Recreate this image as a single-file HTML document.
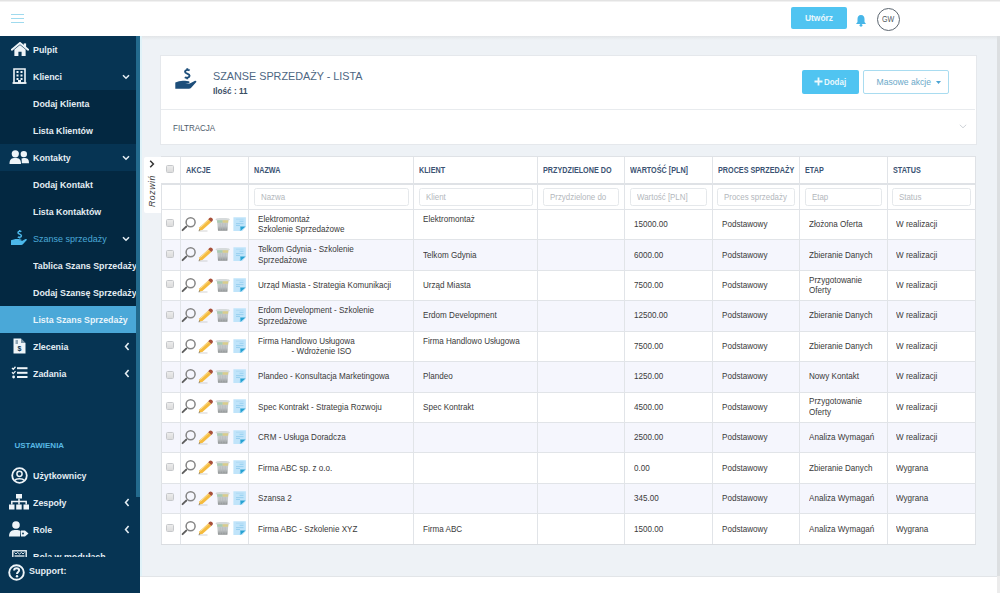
<!DOCTYPE html><html><head><meta charset="utf-8"><title>Szanse sprzedaży</title><style>
*{box-sizing:border-box;margin:0;padding:0}
.sx{display:inline-block;transform-origin:0 0}
html,body{width:1000px;height:593px;overflow:hidden;background:#fff;font-family:"Liberation Sans",sans-serif}
.a{position:absolute}
.nw{white-space:nowrap}
#topstrip{left:0;top:0;width:1000px;height:2px;background:linear-gradient(#e3e3e3 0,#e3e3e3 50%,#fff 100%)}
#hdr{left:0;top:2px;width:1000px;height:35px;background:#fff;border-bottom:1px solid #e3e5e8}
#side{left:0;top:36px;width:140px;height:557px;background:#063453;overflow:hidden}
.si{position:absolute;left:0;width:136px;height:27px;line-height:27px;color:#e4edf3;font-size:9.3px;font-weight:bold;white-space:nowrap}
.si .t{position:absolute;left:32.5px;top:0.6px;transform-origin:0 0;transform:scaleX(0.95)}
.sub{background:#032841}
.act{background:#4aa8d8;color:#e8f4fb}
#content{left:140px;top:36px;width:857px;height:540px;background:#eef2f6}
#footer{left:140px;top:576px;width:857px;height:17px;background:#fff;border-top:1px solid #e2e5e8}
#rstrip{left:997px;top:36px;width:3px;height:540px;background:#dcdfe1}
#panel{left:160px;top:55px;width:817px;height:90px;background:#fff;border:1px solid #e5e8ec}
.th{position:absolute;top:0;height:27px;line-height:27px;font-size:8.6px;font-weight:bold;color:#3b5373;white-space:nowrap}
.td{position:absolute;font-size:8.8px;color:#3a3a3a;white-space:nowrap;line-height:10.7px}
.inp{position:absolute;height:18px;border:1px solid #e5e8eb;border-radius:2.5px;background:#fff;font-size:8.6px;color:#b3b7bc;line-height:16px;padding-left:6px;white-space:nowrap}
.vl{position:absolute;width:1px;background:#e1e4e8}
.hl{position:absolute;height:1px;background:#e1e4e8}
.cb{position:absolute;width:8px;height:8px;border:1px solid #c6c8cb;border-radius:1.5px;background:linear-gradient(#ececec,#dcdcdc)}
</style></head><body><div id="topstrip" class="a"></div><div id="hdr" class="a"><svg class="a" style="left:10px;top:11px" width="15" height="11" viewBox="0 0 15 11"><path d="M1 1.5 H14 M1 5.5 H14 M1 9.5 H14" stroke="#9fdaee" stroke-width="1"/></svg></div><div class="a" style="left:791px;top:7px;width:56px;height:22px;background:#50c4f1;border-radius:2px;color:#eaf8fd;font-size:8.4px;font-weight:bold;line-height:22px;text-align:center">Utwórz</div><svg class="a" style="left:855px;top:14px" width="12" height="13" viewBox="0 0 12 13"><path d="M6 1 C3.5 1 2.5 3 2.5 5 V8 L1 10 H11 L9.5 8 V5 C9.5 3 8.5 1 6 1Z" fill="#47b6e8"/><circle cx="6" cy="11.3" r="1.4" fill="#47b6e8"/></svg><div class="a" style="left:876.5px;top:8px;width:23px;height:23px;border:1.1px solid #5c6670;border-radius:50%;font-size:8.4px;color:#4f5860;line-height:20.6px;text-align:center"><span class="sx" style="transform:scaleX(0.85);transform-origin:50% 50%">GW</span></div>
<div id="side" class="a"><div class="si" style="top:0px"><svg class="a" style="left:10.5px;top:6px" width="18" height="15" viewBox="0 0 19 16"><path d="M0.8 8.2 L9.5 1 L18.2 8.2" fill="none" stroke="#eef4f8" stroke-width="2.2" stroke-linejoin="round" stroke-linecap="round"/><path d="M3.5 8 L9.5 3.2 L15.5 8 V15 H11.2 V10.5 H7.8 V15 H3.5 Z" fill="#eef4f8"/><rect x="13.5" y="1.5" width="2.5" height="4" fill="#eef4f8"/></svg><span class="t" style="">Pulpit</span></div><div class="si" style="top:27px"><svg class="a" style="left:12px;top:5px" width="15" height="16" viewBox="0 0 15 16"><path d="M2 1 H13 V15 H2 Z" fill="none" stroke="#eef4f8" stroke-width="1.6"/><path d="M0.5 15 H14.5" stroke="#eef4f8" stroke-width="1.6"/><g fill="#eef4f8"><rect x="4.5" y="3" width="2" height="2"/><rect x="8.5" y="3" width="2" height="2"/><rect x="4.5" y="6.5" width="2" height="2"/><rect x="8.5" y="6.5" width="2" height="2"/><rect x="4.5" y="10" width="2" height="2"/><rect x="8.5" y="10" width="2" height="2"/><rect x="6" y="12" width="3" height="3"/></g></svg><span class="t" style="">Klienci</span><svg class="a" style="left:121.5px;top:10.5px" width="8" height="6" viewBox="0 0 8 6"><path d="M1 1.2 L4 4.2 L7 1.2" fill="none" stroke="#e4edf3" stroke-width="1.6"/></svg></div><div class="si sub" style="top:54px"><span class="t" style="">Dodaj Klienta</span></div><div class="si sub" style="top:81px"><span class="t" style="">Lista Klientów</span></div><div class="si" style="top:108px"><svg class="a" style="left:9px;top:6px" width="21" height="15" viewBox="0 0 21 15"><circle cx="6.3" cy="3.8" r="3.6" fill="#eef4f8"/><circle cx="14.8" cy="4.1" r="3.2" fill="#eef4f8"/><path d="M0.5 14 C0.5 9 2.5 8 6.3 8 C10 8 12 9 12 14 Z" fill="#eef4f8"/><path d="M12.5 8.5 C13.2 8.2 14 8 14.8 8 C18.5 8 20 9 20 13.2 H12.8 C12.8 11 12.6 9.5 12.5 8.5Z" fill="#eef4f8"/></svg><span class="t" style="">Kontakty</span><svg class="a" style="left:121.5px;top:10.5px" width="8" height="6" viewBox="0 0 8 6"><path d="M1 1.2 L4 4.2 L7 1.2" fill="none" stroke="#e4edf3" stroke-width="1.6"/></svg></div><div class="si sub" style="top:135px"><span class="t" style="">Dodaj Kontakt</span></div><div class="si sub" style="top:162px"><span class="t" style="">Lista Kontaktów</span></div><div class="si sub" style="top:189px"><svg class="a" style="left:10px;top:4px" width="18" height="17" viewBox="0 0 18 17"><path d="M11.4 2.6 C10.6 2 8 2 8 3.7 C8 5.4 11.4 4.9 11.4 6.8 C11.4 8.5 8.7 8.5 7.8 7.9 M9.7 0.9 V2.3 M9.7 8.3 V9.5" fill="none" stroke="#4cb8ea" stroke-width="1.5"/><path d="M1 11.3 L3.8 10.4 C5.3 9.9 6.8 9.8 8.3 10 L11 10.4 C11.9 10.5 12 11.6 11.2 11.7 L8.5 11.9 L11.9 12.1 L15.5 10.1 C16.5 9.6 17.3 10.5 16.6 11.2 L13.1 15 C12.6 15.6 12 15.9 11.2 15.9 L1 15.9 Z" fill="#4cb8ea"/></svg><span class="t" style="color:#4aa8d8;font-weight:normal;font-size:9.3px;transform:scaleX(0.97)">Szanse sprzedaży</span><svg class="a" style="left:121.5px;top:10.5px" width="8" height="6" viewBox="0 0 8 6"><path d="M1 1.2 L4 4.2 L7 1.2" fill="none" stroke="#e4edf3" stroke-width="1.6"/></svg></div><div class="si sub" style="top:216px"><span class="t" style="">Tablica Szans Sprzedaży</span></div><div class="si sub" style="top:243px"><span class="t" style="">Dodaj Szansę Sprzedaży</span></div><div class="si act" style="top:270px"><span class="t" style="">Lista Szans Sprzedaży</span></div><div class="si" style="top:297px"><svg class="a" style="left:13px;top:5px" width="13" height="16" viewBox="0 0 13 16"><path d="M0.5 0.5 H8 L12.5 5 V15.5 H0.5 Z" fill="#eef4f8"/><path d="M8 0.5 V5 H12.5" fill="#063453" opacity="0.5"/><text x="6.5" y="13" font-family="Liberation Sans" font-size="7" fill="#063453" text-anchor="middle">$</text><path d="M2.5 3 H5 M2.5 5 H5" stroke="#063453" stroke-width="0.8"/></svg><span class="t" style="">Zlecenia</span><svg class="a" style="left:124.3px;top:8.5px" width="6" height="9" viewBox="0 0 6 9"><path d="M4.6 1 L1.6 4.5 L4.6 8" fill="none" stroke="#e4edf3" stroke-width="1.6"/></svg></div><div class="si" style="top:324px"><svg class="a" style="left:11px;top:6px" width="17" height="13" viewBox="0 0 17 13"><path d="M1 2 L2.3 3.3 L4.5 0.8 M1 6.3 L2.3 7.6 L4.5 5.1" fill="none" stroke="#eef4f8" stroke-width="1.3"/><circle cx="2.6" cy="11" r="1.4" fill="#eef4f8"/><rect x="6" y="1.2" width="10.5" height="2" fill="#eef4f8"/><rect x="6" y="5.8" width="10.5" height="2" fill="#eef4f8"/><rect x="6" y="10" width="10.5" height="2" fill="#eef4f8"/></svg><span class="t" style="">Zadania</span><svg class="a" style="left:124.3px;top:8.5px" width="6" height="9" viewBox="0 0 6 9"><path d="M4.6 1 L1.6 4.5 L4.6 8" fill="none" stroke="#e4edf3" stroke-width="1.6"/></svg></div><div class="a" style="left:136px;top:0;width:4px;height:461px;background:#236a8d"></div><div class="a nw" style="left:14.5px;top:403px;line-height:14px;font-size:8px;font-weight:bold;color:#58b8e4">USTAWIENIA</div><div class="si" style="top:426px"><svg class="a" style="left:11px;top:5px" width="17" height="17" viewBox="0 0 17 17"><circle cx="8.5" cy="8.5" r="7.3" fill="none" stroke="#eef4f8" stroke-width="1.8"/><circle cx="8.5" cy="6.8" r="2.6" fill="none" stroke="#eef4f8" stroke-width="1.5"/><path d="M4 13.5 C5 11 12 11 13 13.5" fill="none" stroke="#eef4f8" stroke-width="1.5"/></svg><span class="t">Użytkownicy</span></div><div class="si" style="top:453px"><svg class="a" style="left:9px;top:5px" width="20" height="16" viewBox="0 0 20 16"><g fill="#eef4f8"><rect x="7" y="0" width="6" height="4.5"/><rect x="0" y="10.5" width="5.5" height="5"/><rect x="7.2" y="10.5" width="5.5" height="5"/><rect x="14.5" y="10.5" width="5.5" height="5"/></g><path d="M10 4.5 V10.5 M2.8 10.5 V7.5 H17.2 V10.5" fill="none" stroke="#eef4f8" stroke-width="1.5"/></svg><span class="t">Zespoły</span><svg class="a" style="left:124.3px;top:8.5px" width="6" height="9" viewBox="0 0 6 9"><path d="M4.6 1 L1.6 4.5 L4.6 8" fill="none" stroke="#e4edf3" stroke-width="1.6"/></svg></div><div class="si" style="top:480px"><svg class="a" style="left:9px;top:5px" width="20" height="16" viewBox="0 0 20 16"><circle cx="7" cy="4" r="3.8" fill="#eef4f8"/><path d="M0 15.5 C0 10 3 9 7 9 C9 9 10.5 9.3 11.5 10 L11 15.5 Z" fill="#eef4f8"/><path d="M12 9.5 H16 L19.5 12.5 L16 15.5 H12 Z" fill="#eef4f8"/><circle cx="14" cy="12.5" r="0.9" fill="#063453"/></svg><span class="t">Role</span><svg class="a" style="left:124.3px;top:8.5px" width="6" height="9" viewBox="0 0 6 9"><path d="M4.6 1 L1.6 4.5 L4.6 8" fill="none" stroke="#e4edf3" stroke-width="1.6"/></svg></div><div class="si" style="top:507px"><svg class="a" style="left:12px;top:6.5px" width="15" height="14" viewBox="0 0 15 14"><rect x="0.8" y="0.8" width="13.4" height="12" fill="none" stroke="#eef4f8" stroke-width="1.4"/><path d="M2.5 2.5 L4 4 L5.5 2.5 L7.5 4 L9.5 2.5 L11 4 L12.5 2.5" fill="none" stroke="#eef4f8" stroke-width="0.9"/><path d="M2.5 6 H12.5" stroke="#eef4f8" stroke-width="1.3"/></svg><span class="t">Rola w modułach</span></div><div class="a" style="left:0;top:521px;width:140px;height:36px;background:#063453"><svg class="a" style="left:7.8px;top:7px" width="17" height="17" viewBox="0 0 17 17"><circle cx="8.5" cy="8.5" r="7.3" fill="none" stroke="#eef4f8" stroke-width="1.9"/><path d="M6.1 6.6 C6.1 4.9 7.2 4.2 8.6 4.2 C10 4.2 11.1 5 11.1 6.3 C11.1 7.9 9 8 9 9.9" fill="none" stroke="#eef4f8" stroke-width="2"/><circle cx="9" cy="12.3" r="1.2" fill="#eef4f8"/></svg><span class="a nw" style="left:29px;top:-3px;line-height:35px;font-size:9px;font-weight:bold;color:#e4edf3">Support:</span></div></div>
<div id="content" class="a"></div><div class="a" style="left:140px;top:36px;width:857px;height:4px;background:linear-gradient(#e2e5e8,#eef2f6)"></div><div class="a" style="left:140px;top:36px;width:2px;height:540px;background:#dff2f8"></div>
<div id="footer" class="a"></div>
<div id="rstrip" class="a"></div><div class="a" style="left:997px;top:576px;width:3px;height:17px;background:#ececec"></div>
<div id="panel" class="a"></div><svg class="a" style="left:174px;top:67px" width="24" height="23" viewBox="0 0 24 23"><path d="M15.6 3.4 C14.6 2.6 11 2.6 11 4.8 C11 7 15.6 6.3 15.6 8.8 C15.6 11 12 11 10.8 10.2 M13.3 1.2 V3 M13.3 10.8 V12.3" fill="none" stroke="#1d4e7a" stroke-width="1.9"/><path d="M1.3 15.6 L5 14.3 C7 13.6 9 13.5 11 13.8 L14.6 14.3 C15.8 14.5 15.9 15.9 14.8 16.1 L11.2 16.4 L15.8 16.6 L20.6 13.9 C21.9 13.2 23 14.4 22.1 15.3 L17.4 20.6 C16.7 21.4 15.9 21.8 14.8 21.8 L1.3 21.8 Z" fill="#1d4e7a"/></svg><div class="a nw" style="left:213px;top:68.7px;font-size:11.8px;line-height:14px;color:#4d6682"><span class="sx" style="transform:scaleX(0.915)">SZANSE SPRZEDAŻY - LISTA</span></div><div class="a nw" style="left:213px;top:85.6px;font-size:9px;line-height:11px;font-weight:bold;color:#3b4d64"><span class="sx" style="transform:scaleX(0.91)">Ilość : 11</span></div><div class="a" style="left:802px;top:70px;width:57px;height:24px;background:#50c4f1;border-radius:2px"></div><svg class="a" style="left:814px;top:77px" width="9" height="9" viewBox="0 0 9 9"><path d="M4.5 0.5 V8.5 M0.5 4.5 H8.5" stroke="#eef9fd" stroke-width="1.8"/></svg><div class="a nw" style="left:824.4px;top:70px;line-height:24px;font-size:9.4px;font-weight:bold;color:#eaf8fd"><span class="sx" style="transform:scaleX(0.85)">Dodaj</span></div><div class="a" style="left:863px;top:70px;width:86px;height:24px;border:1px solid #a9dcf0;border-radius:2px;background:#fff"></div><div class="a nw" style="left:876.5px;top:70px;line-height:24px;font-size:8.6px;color:#6aa9c9">Masowe akcje</div><svg class="a" style="left:936px;top:81px" width="5" height="3" viewBox="0 0 5 3"><path d="M0 0 H5 L2.5 3Z" fill="#4aa3d3"/></svg><div class="a" style="left:161px;top:109px;width:814px;height:1px;background:#e8ebee"></div><div class="a nw" style="left:172.5px;top:121.6px;line-height:12px;font-size:9.5px;color:#4f5d6c"><span class="sx" style="transform:scaleX(0.845)">FILTRACJA</span></div><svg class="a" style="left:959px;top:124px" width="8" height="5" viewBox="0 0 8 5"><path d="M0.8 0.8 L4 3.8 L7.2 0.8" fill="none" stroke="#c8cdd2" stroke-width="0.9"/></svg>
<div class="a" style="left:143.5px;top:157px;width:18px;height:56px;background:#fff;border-radius:2px 0 0 2px"></div><svg class="a" style="left:148.8px;top:159.8px" width="6" height="8" viewBox="0 0 6 8"><path d="M1.2 0.8 L4.4 4 L1.2 7.2" fill="none" stroke="#333" stroke-width="1.5"/></svg><div class="a nw" style="left:152px;top:191px;transform:translate(-50%,-50%) rotate(-90deg);font-size:8.7px;font-style:italic;color:#3a3a3a;letter-spacing:0.6px">Rozwiń</div><div class="a" style="left:161px;top:156.6px;width:814.5px;height:387.54999999999995px;background:#fff"></div><div class="a" style="left:161px;top:240.15px;width:814.5px;height:29.95px;background:#f5f6fd"></div><div class="a" style="left:161px;top:301.05px;width:814.5px;height:29.95px;background:#f5f6fd"></div><div class="a" style="left:161px;top:361.95px;width:814.5px;height:29.95px;background:#f5f6fd"></div><div class="a" style="left:161px;top:422.85px;width:814.5px;height:29.95px;background:#f5f6fd"></div><div class="a" style="left:161px;top:483.75px;width:814.5px;height:29.95px;background:#f5f6fd"></div><div class="hl" style="left:161px;top:156.1px;width:815.0px;background:#dfe2e6"></div><div class="hl" style="left:160.6px;top:543.65px;width:815.4px;background:#dadde1"></div><div class="vl" style="left:160.6px;top:183px;height:361.15px;background:#dfe2e6"></div><div class="vl" style="left:975.0px;top:156.6px;height:387.55px;background:#dfe2e6"></div><div class="hl" style="left:161px;top:182.8px;width:814.5px;height:2px;background:#dfe2e6"></div><div class="hl" style="left:161px;top:208.80px;width:814.5px"></div><div class="hl" style="left:161px;top:239.25px;width:814.5px"></div><div class="hl" style="left:161px;top:269.70px;width:814.5px"></div><div class="hl" style="left:161px;top:300.15px;width:814.5px"></div><div class="hl" style="left:161px;top:330.60px;width:814.5px"></div><div class="hl" style="left:161px;top:361.05px;width:814.5px"></div><div class="hl" style="left:161px;top:391.50px;width:814.5px"></div><div class="hl" style="left:161px;top:421.95px;width:814.5px"></div><div class="hl" style="left:161px;top:452.40px;width:814.5px"></div><div class="hl" style="left:161px;top:482.85px;width:814.5px"></div><div class="hl" style="left:161px;top:513.30px;width:814.5px"></div><div class="vl" style="left:179.5px;top:156.6px;height:387.55px"></div><div class="vl" style="left:248.0px;top:156.6px;height:387.55px"></div><div class="vl" style="left:413.3px;top:156.6px;height:387.55px"></div><div class="vl" style="left:537.1px;top:156.6px;height:387.55px"></div><div class="vl" style="left:624.0px;top:156.6px;height:387.55px"></div><div class="vl" style="left:711.5px;top:156.6px;height:387.55px"></div><div class="vl" style="left:799.0px;top:156.6px;height:387.55px"></div><div class="vl" style="left:886.5px;top:156.6px;height:387.55px"></div><div class="th" style="left:185.5px;top:156.5px"><span class="sx" style="transform:scaleX(0.84)">AKCJE</span></div><div class="th" style="left:254.0px;top:156.5px"><span class="sx" style="transform:scaleX(0.84)">NAZWA</span></div><div class="th" style="left:419.3px;top:156.5px"><span class="sx" style="transform:scaleX(0.84)">KLIENT</span></div><div class="th" style="left:543.1px;top:156.5px"><span class="sx" style="transform:scaleX(0.84)">PRZYDZIELONE DO</span></div><div class="th" style="left:630.0px;top:156.5px"><span class="sx" style="transform:scaleX(0.84)">WARTOŚĆ [PLN]</span></div><div class="th" style="left:717.5px;top:156.5px"><span class="sx" style="transform:scaleX(0.84)">PROCES SPRZEDAŻY</span></div><div class="th" style="left:805.0px;top:156.5px"><span class="sx" style="transform:scaleX(0.84)">ETAP</span></div><div class="th" style="left:892.5px;top:156.5px"><span class="sx" style="transform:scaleX(0.84)">STATUS</span></div><div class="cb" style="left:166px;top:164.8px"></div><div class="inp" style="left:253.5px;top:187.5px;width:155.3px"><span class="sx" style="transform:scaleX(0.92)">Nazwa</span></div><div class="inp" style="left:418.8px;top:187.5px;width:113.80000000000001px"><span class="sx" style="transform:scaleX(0.92)">Klient</span></div><div class="inp" style="left:542.6px;top:187.5px;width:76.89999999999998px"><span class="sx" style="transform:scaleX(0.92)">Przydzielone do</span></div><div class="inp" style="left:629.5px;top:187.5px;width:77.5px"><span class="sx" style="transform:scaleX(0.92)">Wartość [PLN]</span></div><div class="inp" style="left:717px;top:187.5px;width:77.5px"><span class="sx" style="transform:scaleX(0.92)">Proces sprzedaży</span></div><div class="inp" style="left:804.5px;top:187.5px;width:77.5px"><span class="sx" style="transform:scaleX(0.92)">Etap</span></div><div class="inp" style="left:892px;top:187.5px;width:78.5px"><span class="sx" style="transform:scaleX(0.92)">Status</span></div><div class="cb" style="left:166px;top:219.20px"></div><div class="a" style="left:181px;top:216.70px"><svg width="66" height="15" viewBox="0 0 66 15" style="display:block;overflow:visible">
<defs><linearGradient id="tg" x1="0" y1="0" x2="0" y2="1"><stop offset="0" stop-color="#c9cdce"/><stop offset="0.55" stop-color="#c2c6c7"/><stop offset="1" stop-color="#8a8e8f"/></linearGradient></defs>
<circle cx="9.6" cy="5.3" r="4.5" fill="none" stroke="#858585" stroke-width="1.5"/>
<path d="M5.2 9.6 L1.6 13.2" stroke="#5e5e5e" stroke-width="1.9" stroke-linecap="round"/>
<path d="M17.8 13.6 L18.6 10.2 L27.4 2.2 L30.4 5 L21.4 13 Z" fill="#f5bb3e"/>
<path d="M19.4 10.5 L27.8 2.9" stroke="#fbe3a0" stroke-width="0.9"/>
<path d="M27.2 2.2 L28.4 1 C29.1 0.3 30.2 0.3 30.9 1 L31.4 1.5 C32.1 2.2 32.1 3.2 31.4 3.9 L30.3 5 Z" fill="#a8503a"/>
<path d="M17.4 14 H26.5" stroke="#aaa" stroke-width="0.7" opacity="0.7"/>
<path d="M17.7 13.8 L18.3 12.2 L19.3 13.2 Z" fill="#666"/>
<path d="M34.8 2.2 C35 1.2 36 0.9 41.7 0.9 C47.4 0.9 48.4 1.2 48.6 2.2 L48 3.4 H35.4 Z" fill="#d6dadb"/>
<path d="M36 3.2 H47.4 L46.4 13.8 H37 Z" fill="url(#tg)"/>
<path d="M36.1 3.2 H41.6 V5.8 H36.3 Z" fill="#a9ccb2"/>
<path d="M41.6 3.2 H47.3 L47.1 5.8 H41.6 Z" fill="#d8cd8c"/>
<path d="M39.2 6.2 V13.5 M41.7 6.2 V13.5 M44.2 6.2 V13.5" stroke="#b3b7b8" stroke-width="0.6"/>
<path d="M52.4 0.2 H64.9 V10 L61.2 14.1 H52.4 Z" fill="#c0e4fa"/>
<path d="M59.2 9.5 H64.6 L59.4 13.9 Z" fill="#27a2d2"/>
<path d="M59.2 9.5 L59.4 13.9 L58.6 13.5 Z" fill="#8ad4f5"/>
<path d="M58.6 4.3 H62.5 M55 6.6 H62.5 M55 8.5 H59" stroke="#93cdee" stroke-width="0.9"/>
<path d="M55 2.3 H62.5" stroke="#a9d8f2" stroke-width="0.7"/>
</svg></div><div class="td" style="left:258.4px;top:213.72px"><span class="sx" style="transform:scaleX(0.92)">Elektromontaż<br>Szkolenie Sprzedażowe</span></div><div class="td" style="left:423px;top:213.72px"><span class="sx" style="transform:scaleX(0.92)">Elektromontaż<br>&nbsp;</span></div><div class="td" style="left:634px;top:219.07px"><span class="sx" style="transform:scaleX(0.92)">15000.00</span></div><div class="td" style="left:722px;top:219.07px"><span class="sx" style="transform:scaleX(0.92)">Podstawowy</span></div><div class="td" style="left:808.5px;top:219.07px"><span class="sx" style="transform:scaleX(0.92)">Złożona Oferta</span></div><div class="td" style="left:896.3px;top:219.07px"><span class="sx" style="transform:scaleX(0.92)">W realizacji</span></div><div class="cb" style="left:166px;top:249.65px"></div><div class="a" style="left:181px;top:247.15px"><svg width="66" height="15" viewBox="0 0 66 15" style="display:block;overflow:visible">
<defs><linearGradient id="tg" x1="0" y1="0" x2="0" y2="1"><stop offset="0" stop-color="#c9cdce"/><stop offset="0.55" stop-color="#c2c6c7"/><stop offset="1" stop-color="#8a8e8f"/></linearGradient></defs>
<circle cx="9.6" cy="5.3" r="4.5" fill="none" stroke="#858585" stroke-width="1.5"/>
<path d="M5.2 9.6 L1.6 13.2" stroke="#5e5e5e" stroke-width="1.9" stroke-linecap="round"/>
<path d="M17.8 13.6 L18.6 10.2 L27.4 2.2 L30.4 5 L21.4 13 Z" fill="#f5bb3e"/>
<path d="M19.4 10.5 L27.8 2.9" stroke="#fbe3a0" stroke-width="0.9"/>
<path d="M27.2 2.2 L28.4 1 C29.1 0.3 30.2 0.3 30.9 1 L31.4 1.5 C32.1 2.2 32.1 3.2 31.4 3.9 L30.3 5 Z" fill="#a8503a"/>
<path d="M17.4 14 H26.5" stroke="#aaa" stroke-width="0.7" opacity="0.7"/>
<path d="M17.7 13.8 L18.3 12.2 L19.3 13.2 Z" fill="#666"/>
<path d="M34.8 2.2 C35 1.2 36 0.9 41.7 0.9 C47.4 0.9 48.4 1.2 48.6 2.2 L48 3.4 H35.4 Z" fill="#d6dadb"/>
<path d="M36 3.2 H47.4 L46.4 13.8 H37 Z" fill="url(#tg)"/>
<path d="M36.1 3.2 H41.6 V5.8 H36.3 Z" fill="#a9ccb2"/>
<path d="M41.6 3.2 H47.3 L47.1 5.8 H41.6 Z" fill="#d8cd8c"/>
<path d="M39.2 6.2 V13.5 M41.7 6.2 V13.5 M44.2 6.2 V13.5" stroke="#b3b7b8" stroke-width="0.6"/>
<path d="M52.4 0.2 H64.9 V10 L61.2 14.1 H52.4 Z" fill="#c0e4fa"/>
<path d="M59.2 9.5 H64.6 L59.4 13.9 Z" fill="#27a2d2"/>
<path d="M59.2 9.5 L59.4 13.9 L58.6 13.5 Z" fill="#8ad4f5"/>
<path d="M58.6 4.3 H62.5 M55 6.6 H62.5 M55 8.5 H59" stroke="#93cdee" stroke-width="0.9"/>
<path d="M55 2.3 H62.5" stroke="#a9d8f2" stroke-width="0.7"/>
</svg></div><div class="td" style="left:258.4px;top:244.17px"><span class="sx" style="transform:scaleX(0.92)">Telkom Gdynia - Szkolenie<br>Sprzedażowe</span></div><div class="td" style="left:423px;top:249.52px"><span class="sx" style="transform:scaleX(0.92)">Telkom Gdynia</span></div><div class="td" style="left:634px;top:249.52px"><span class="sx" style="transform:scaleX(0.92)">6000.00</span></div><div class="td" style="left:722px;top:249.52px"><span class="sx" style="transform:scaleX(0.92)">Podstawowy</span></div><div class="td" style="left:808.5px;top:249.52px"><span class="sx" style="transform:scaleX(0.92)">Zbieranie Danych</span></div><div class="td" style="left:896.3px;top:249.52px"><span class="sx" style="transform:scaleX(0.92)">W realizacji</span></div><div class="cb" style="left:166px;top:280.10px"></div><div class="a" style="left:181px;top:277.60px"><svg width="66" height="15" viewBox="0 0 66 15" style="display:block;overflow:visible">
<defs><linearGradient id="tg" x1="0" y1="0" x2="0" y2="1"><stop offset="0" stop-color="#c9cdce"/><stop offset="0.55" stop-color="#c2c6c7"/><stop offset="1" stop-color="#8a8e8f"/></linearGradient></defs>
<circle cx="9.6" cy="5.3" r="4.5" fill="none" stroke="#858585" stroke-width="1.5"/>
<path d="M5.2 9.6 L1.6 13.2" stroke="#5e5e5e" stroke-width="1.9" stroke-linecap="round"/>
<path d="M17.8 13.6 L18.6 10.2 L27.4 2.2 L30.4 5 L21.4 13 Z" fill="#f5bb3e"/>
<path d="M19.4 10.5 L27.8 2.9" stroke="#fbe3a0" stroke-width="0.9"/>
<path d="M27.2 2.2 L28.4 1 C29.1 0.3 30.2 0.3 30.9 1 L31.4 1.5 C32.1 2.2 32.1 3.2 31.4 3.9 L30.3 5 Z" fill="#a8503a"/>
<path d="M17.4 14 H26.5" stroke="#aaa" stroke-width="0.7" opacity="0.7"/>
<path d="M17.7 13.8 L18.3 12.2 L19.3 13.2 Z" fill="#666"/>
<path d="M34.8 2.2 C35 1.2 36 0.9 41.7 0.9 C47.4 0.9 48.4 1.2 48.6 2.2 L48 3.4 H35.4 Z" fill="#d6dadb"/>
<path d="M36 3.2 H47.4 L46.4 13.8 H37 Z" fill="url(#tg)"/>
<path d="M36.1 3.2 H41.6 V5.8 H36.3 Z" fill="#a9ccb2"/>
<path d="M41.6 3.2 H47.3 L47.1 5.8 H41.6 Z" fill="#d8cd8c"/>
<path d="M39.2 6.2 V13.5 M41.7 6.2 V13.5 M44.2 6.2 V13.5" stroke="#b3b7b8" stroke-width="0.6"/>
<path d="M52.4 0.2 H64.9 V10 L61.2 14.1 H52.4 Z" fill="#c0e4fa"/>
<path d="M59.2 9.5 H64.6 L59.4 13.9 Z" fill="#27a2d2"/>
<path d="M59.2 9.5 L59.4 13.9 L58.6 13.5 Z" fill="#8ad4f5"/>
<path d="M58.6 4.3 H62.5 M55 6.6 H62.5 M55 8.5 H59" stroke="#93cdee" stroke-width="0.9"/>
<path d="M55 2.3 H62.5" stroke="#a9d8f2" stroke-width="0.7"/>
</svg></div><div class="td" style="left:258.4px;top:279.97px"><span class="sx" style="transform:scaleX(0.92)">Urząd Miasta - Strategia Komunikacji</span></div><div class="td" style="left:423px;top:279.97px"><span class="sx" style="transform:scaleX(0.92)">Urząd Miasta</span></div><div class="td" style="left:634px;top:279.97px"><span class="sx" style="transform:scaleX(0.92)">7500.00</span></div><div class="td" style="left:722px;top:279.97px"><span class="sx" style="transform:scaleX(0.92)">Podstawowy</span></div><div class="td" style="left:808.5px;top:274.62px"><span class="sx" style="transform:scaleX(0.92)">Przygotowanie<br>Oferty</span></div><div class="td" style="left:896.3px;top:279.97px"><span class="sx" style="transform:scaleX(0.92)">W realizacji</span></div><div class="cb" style="left:166px;top:310.55px"></div><div class="a" style="left:181px;top:308.05px"><svg width="66" height="15" viewBox="0 0 66 15" style="display:block;overflow:visible">
<defs><linearGradient id="tg" x1="0" y1="0" x2="0" y2="1"><stop offset="0" stop-color="#c9cdce"/><stop offset="0.55" stop-color="#c2c6c7"/><stop offset="1" stop-color="#8a8e8f"/></linearGradient></defs>
<circle cx="9.6" cy="5.3" r="4.5" fill="none" stroke="#858585" stroke-width="1.5"/>
<path d="M5.2 9.6 L1.6 13.2" stroke="#5e5e5e" stroke-width="1.9" stroke-linecap="round"/>
<path d="M17.8 13.6 L18.6 10.2 L27.4 2.2 L30.4 5 L21.4 13 Z" fill="#f5bb3e"/>
<path d="M19.4 10.5 L27.8 2.9" stroke="#fbe3a0" stroke-width="0.9"/>
<path d="M27.2 2.2 L28.4 1 C29.1 0.3 30.2 0.3 30.9 1 L31.4 1.5 C32.1 2.2 32.1 3.2 31.4 3.9 L30.3 5 Z" fill="#a8503a"/>
<path d="M17.4 14 H26.5" stroke="#aaa" stroke-width="0.7" opacity="0.7"/>
<path d="M17.7 13.8 L18.3 12.2 L19.3 13.2 Z" fill="#666"/>
<path d="M34.8 2.2 C35 1.2 36 0.9 41.7 0.9 C47.4 0.9 48.4 1.2 48.6 2.2 L48 3.4 H35.4 Z" fill="#d6dadb"/>
<path d="M36 3.2 H47.4 L46.4 13.8 H37 Z" fill="url(#tg)"/>
<path d="M36.1 3.2 H41.6 V5.8 H36.3 Z" fill="#a9ccb2"/>
<path d="M41.6 3.2 H47.3 L47.1 5.8 H41.6 Z" fill="#d8cd8c"/>
<path d="M39.2 6.2 V13.5 M41.7 6.2 V13.5 M44.2 6.2 V13.5" stroke="#b3b7b8" stroke-width="0.6"/>
<path d="M52.4 0.2 H64.9 V10 L61.2 14.1 H52.4 Z" fill="#c0e4fa"/>
<path d="M59.2 9.5 H64.6 L59.4 13.9 Z" fill="#27a2d2"/>
<path d="M59.2 9.5 L59.4 13.9 L58.6 13.5 Z" fill="#8ad4f5"/>
<path d="M58.6 4.3 H62.5 M55 6.6 H62.5 M55 8.5 H59" stroke="#93cdee" stroke-width="0.9"/>
<path d="M55 2.3 H62.5" stroke="#a9d8f2" stroke-width="0.7"/>
</svg></div><div class="td" style="left:258.4px;top:305.07px"><span class="sx" style="transform:scaleX(0.92)">Erdom Development - Szkolenie<br>Sprzedażowe</span></div><div class="td" style="left:423px;top:310.42px"><span class="sx" style="transform:scaleX(0.92)">Erdom Development</span></div><div class="td" style="left:634px;top:310.42px"><span class="sx" style="transform:scaleX(0.92)">12500.00</span></div><div class="td" style="left:722px;top:310.42px"><span class="sx" style="transform:scaleX(0.92)">Podstawowy</span></div><div class="td" style="left:808.5px;top:310.42px"><span class="sx" style="transform:scaleX(0.92)">Zbieranie Danych</span></div><div class="td" style="left:896.3px;top:310.42px"><span class="sx" style="transform:scaleX(0.92)">W realizacji</span></div><div class="cb" style="left:166px;top:341.00px"></div><div class="a" style="left:181px;top:338.50px"><svg width="66" height="15" viewBox="0 0 66 15" style="display:block;overflow:visible">
<defs><linearGradient id="tg" x1="0" y1="0" x2="0" y2="1"><stop offset="0" stop-color="#c9cdce"/><stop offset="0.55" stop-color="#c2c6c7"/><stop offset="1" stop-color="#8a8e8f"/></linearGradient></defs>
<circle cx="9.6" cy="5.3" r="4.5" fill="none" stroke="#858585" stroke-width="1.5"/>
<path d="M5.2 9.6 L1.6 13.2" stroke="#5e5e5e" stroke-width="1.9" stroke-linecap="round"/>
<path d="M17.8 13.6 L18.6 10.2 L27.4 2.2 L30.4 5 L21.4 13 Z" fill="#f5bb3e"/>
<path d="M19.4 10.5 L27.8 2.9" stroke="#fbe3a0" stroke-width="0.9"/>
<path d="M27.2 2.2 L28.4 1 C29.1 0.3 30.2 0.3 30.9 1 L31.4 1.5 C32.1 2.2 32.1 3.2 31.4 3.9 L30.3 5 Z" fill="#a8503a"/>
<path d="M17.4 14 H26.5" stroke="#aaa" stroke-width="0.7" opacity="0.7"/>
<path d="M17.7 13.8 L18.3 12.2 L19.3 13.2 Z" fill="#666"/>
<path d="M34.8 2.2 C35 1.2 36 0.9 41.7 0.9 C47.4 0.9 48.4 1.2 48.6 2.2 L48 3.4 H35.4 Z" fill="#d6dadb"/>
<path d="M36 3.2 H47.4 L46.4 13.8 H37 Z" fill="url(#tg)"/>
<path d="M36.1 3.2 H41.6 V5.8 H36.3 Z" fill="#a9ccb2"/>
<path d="M41.6 3.2 H47.3 L47.1 5.8 H41.6 Z" fill="#d8cd8c"/>
<path d="M39.2 6.2 V13.5 M41.7 6.2 V13.5 M44.2 6.2 V13.5" stroke="#b3b7b8" stroke-width="0.6"/>
<path d="M52.4 0.2 H64.9 V10 L61.2 14.1 H52.4 Z" fill="#c0e4fa"/>
<path d="M59.2 9.5 H64.6 L59.4 13.9 Z" fill="#27a2d2"/>
<path d="M59.2 9.5 L59.4 13.9 L58.6 13.5 Z" fill="#8ad4f5"/>
<path d="M58.6 4.3 H62.5 M55 6.6 H62.5 M55 8.5 H59" stroke="#93cdee" stroke-width="0.9"/>
<path d="M55 2.3 H62.5" stroke="#a9d8f2" stroke-width="0.7"/>
</svg></div><div class="td" style="left:258.4px;top:335.52px"><span class="sx" style="transform:scaleX(0.92)">Firma Handlowo Usługowa<br><span style="padding-left:36.5px">- Wdrożenie ISO</span></span></div><div class="td" style="left:423px;top:335.52px"><span class="sx" style="transform:scaleX(0.92)">Firma Handlowo Usługowa<br>&nbsp;</span></div><div class="td" style="left:634px;top:340.88px"><span class="sx" style="transform:scaleX(0.92)">7500.00</span></div><div class="td" style="left:722px;top:340.88px"><span class="sx" style="transform:scaleX(0.92)">Podstawowy</span></div><div class="td" style="left:808.5px;top:340.88px"><span class="sx" style="transform:scaleX(0.92)">Zbieranie Danych</span></div><div class="td" style="left:896.3px;top:340.88px"><span class="sx" style="transform:scaleX(0.92)">W realizacji</span></div><div class="cb" style="left:166px;top:371.45px"></div><div class="a" style="left:181px;top:368.95px"><svg width="66" height="15" viewBox="0 0 66 15" style="display:block;overflow:visible">
<defs><linearGradient id="tg" x1="0" y1="0" x2="0" y2="1"><stop offset="0" stop-color="#c9cdce"/><stop offset="0.55" stop-color="#c2c6c7"/><stop offset="1" stop-color="#8a8e8f"/></linearGradient></defs>
<circle cx="9.6" cy="5.3" r="4.5" fill="none" stroke="#858585" stroke-width="1.5"/>
<path d="M5.2 9.6 L1.6 13.2" stroke="#5e5e5e" stroke-width="1.9" stroke-linecap="round"/>
<path d="M17.8 13.6 L18.6 10.2 L27.4 2.2 L30.4 5 L21.4 13 Z" fill="#f5bb3e"/>
<path d="M19.4 10.5 L27.8 2.9" stroke="#fbe3a0" stroke-width="0.9"/>
<path d="M27.2 2.2 L28.4 1 C29.1 0.3 30.2 0.3 30.9 1 L31.4 1.5 C32.1 2.2 32.1 3.2 31.4 3.9 L30.3 5 Z" fill="#a8503a"/>
<path d="M17.4 14 H26.5" stroke="#aaa" stroke-width="0.7" opacity="0.7"/>
<path d="M17.7 13.8 L18.3 12.2 L19.3 13.2 Z" fill="#666"/>
<path d="M34.8 2.2 C35 1.2 36 0.9 41.7 0.9 C47.4 0.9 48.4 1.2 48.6 2.2 L48 3.4 H35.4 Z" fill="#d6dadb"/>
<path d="M36 3.2 H47.4 L46.4 13.8 H37 Z" fill="url(#tg)"/>
<path d="M36.1 3.2 H41.6 V5.8 H36.3 Z" fill="#a9ccb2"/>
<path d="M41.6 3.2 H47.3 L47.1 5.8 H41.6 Z" fill="#d8cd8c"/>
<path d="M39.2 6.2 V13.5 M41.7 6.2 V13.5 M44.2 6.2 V13.5" stroke="#b3b7b8" stroke-width="0.6"/>
<path d="M52.4 0.2 H64.9 V10 L61.2 14.1 H52.4 Z" fill="#c0e4fa"/>
<path d="M59.2 9.5 H64.6 L59.4 13.9 Z" fill="#27a2d2"/>
<path d="M59.2 9.5 L59.4 13.9 L58.6 13.5 Z" fill="#8ad4f5"/>
<path d="M58.6 4.3 H62.5 M55 6.6 H62.5 M55 8.5 H59" stroke="#93cdee" stroke-width="0.9"/>
<path d="M55 2.3 H62.5" stroke="#a9d8f2" stroke-width="0.7"/>
</svg></div><div class="td" style="left:258.4px;top:371.32px"><span class="sx" style="transform:scaleX(0.92)">Plandeo - Konsultacja Marketingowa</span></div><div class="td" style="left:423px;top:371.32px"><span class="sx" style="transform:scaleX(0.92)">Plandeo</span></div><div class="td" style="left:634px;top:371.32px"><span class="sx" style="transform:scaleX(0.92)">1250.00</span></div><div class="td" style="left:722px;top:371.32px"><span class="sx" style="transform:scaleX(0.92)">Podstawowy</span></div><div class="td" style="left:808.5px;top:371.32px"><span class="sx" style="transform:scaleX(0.92)">Nowy Kontakt</span></div><div class="td" style="left:896.3px;top:371.32px"><span class="sx" style="transform:scaleX(0.92)">W realizacji</span></div><div class="cb" style="left:166px;top:401.90px"></div><div class="a" style="left:181px;top:399.40px"><svg width="66" height="15" viewBox="0 0 66 15" style="display:block;overflow:visible">
<defs><linearGradient id="tg" x1="0" y1="0" x2="0" y2="1"><stop offset="0" stop-color="#c9cdce"/><stop offset="0.55" stop-color="#c2c6c7"/><stop offset="1" stop-color="#8a8e8f"/></linearGradient></defs>
<circle cx="9.6" cy="5.3" r="4.5" fill="none" stroke="#858585" stroke-width="1.5"/>
<path d="M5.2 9.6 L1.6 13.2" stroke="#5e5e5e" stroke-width="1.9" stroke-linecap="round"/>
<path d="M17.8 13.6 L18.6 10.2 L27.4 2.2 L30.4 5 L21.4 13 Z" fill="#f5bb3e"/>
<path d="M19.4 10.5 L27.8 2.9" stroke="#fbe3a0" stroke-width="0.9"/>
<path d="M27.2 2.2 L28.4 1 C29.1 0.3 30.2 0.3 30.9 1 L31.4 1.5 C32.1 2.2 32.1 3.2 31.4 3.9 L30.3 5 Z" fill="#a8503a"/>
<path d="M17.4 14 H26.5" stroke="#aaa" stroke-width="0.7" opacity="0.7"/>
<path d="M17.7 13.8 L18.3 12.2 L19.3 13.2 Z" fill="#666"/>
<path d="M34.8 2.2 C35 1.2 36 0.9 41.7 0.9 C47.4 0.9 48.4 1.2 48.6 2.2 L48 3.4 H35.4 Z" fill="#d6dadb"/>
<path d="M36 3.2 H47.4 L46.4 13.8 H37 Z" fill="url(#tg)"/>
<path d="M36.1 3.2 H41.6 V5.8 H36.3 Z" fill="#a9ccb2"/>
<path d="M41.6 3.2 H47.3 L47.1 5.8 H41.6 Z" fill="#d8cd8c"/>
<path d="M39.2 6.2 V13.5 M41.7 6.2 V13.5 M44.2 6.2 V13.5" stroke="#b3b7b8" stroke-width="0.6"/>
<path d="M52.4 0.2 H64.9 V10 L61.2 14.1 H52.4 Z" fill="#c0e4fa"/>
<path d="M59.2 9.5 H64.6 L59.4 13.9 Z" fill="#27a2d2"/>
<path d="M59.2 9.5 L59.4 13.9 L58.6 13.5 Z" fill="#8ad4f5"/>
<path d="M58.6 4.3 H62.5 M55 6.6 H62.5 M55 8.5 H59" stroke="#93cdee" stroke-width="0.9"/>
<path d="M55 2.3 H62.5" stroke="#a9d8f2" stroke-width="0.7"/>
</svg></div><div class="td" style="left:258.4px;top:401.77px"><span class="sx" style="transform:scaleX(0.92)">Spec Kontrakt - Strategia Rozwoju</span></div><div class="td" style="left:423px;top:401.77px"><span class="sx" style="transform:scaleX(0.92)">Spec Kontrakt</span></div><div class="td" style="left:634px;top:401.77px"><span class="sx" style="transform:scaleX(0.92)">4500.00</span></div><div class="td" style="left:722px;top:401.77px"><span class="sx" style="transform:scaleX(0.92)">Podstawowy</span></div><div class="td" style="left:808.5px;top:396.42px"><span class="sx" style="transform:scaleX(0.92)">Przygotowanie<br>Oferty</span></div><div class="td" style="left:896.3px;top:401.77px"><span class="sx" style="transform:scaleX(0.92)">W realizacji</span></div><div class="cb" style="left:166px;top:432.35px"></div><div class="a" style="left:181px;top:429.85px"><svg width="66" height="15" viewBox="0 0 66 15" style="display:block;overflow:visible">
<defs><linearGradient id="tg" x1="0" y1="0" x2="0" y2="1"><stop offset="0" stop-color="#c9cdce"/><stop offset="0.55" stop-color="#c2c6c7"/><stop offset="1" stop-color="#8a8e8f"/></linearGradient></defs>
<circle cx="9.6" cy="5.3" r="4.5" fill="none" stroke="#858585" stroke-width="1.5"/>
<path d="M5.2 9.6 L1.6 13.2" stroke="#5e5e5e" stroke-width="1.9" stroke-linecap="round"/>
<path d="M17.8 13.6 L18.6 10.2 L27.4 2.2 L30.4 5 L21.4 13 Z" fill="#f5bb3e"/>
<path d="M19.4 10.5 L27.8 2.9" stroke="#fbe3a0" stroke-width="0.9"/>
<path d="M27.2 2.2 L28.4 1 C29.1 0.3 30.2 0.3 30.9 1 L31.4 1.5 C32.1 2.2 32.1 3.2 31.4 3.9 L30.3 5 Z" fill="#a8503a"/>
<path d="M17.4 14 H26.5" stroke="#aaa" stroke-width="0.7" opacity="0.7"/>
<path d="M17.7 13.8 L18.3 12.2 L19.3 13.2 Z" fill="#666"/>
<path d="M34.8 2.2 C35 1.2 36 0.9 41.7 0.9 C47.4 0.9 48.4 1.2 48.6 2.2 L48 3.4 H35.4 Z" fill="#d6dadb"/>
<path d="M36 3.2 H47.4 L46.4 13.8 H37 Z" fill="url(#tg)"/>
<path d="M36.1 3.2 H41.6 V5.8 H36.3 Z" fill="#a9ccb2"/>
<path d="M41.6 3.2 H47.3 L47.1 5.8 H41.6 Z" fill="#d8cd8c"/>
<path d="M39.2 6.2 V13.5 M41.7 6.2 V13.5 M44.2 6.2 V13.5" stroke="#b3b7b8" stroke-width="0.6"/>
<path d="M52.4 0.2 H64.9 V10 L61.2 14.1 H52.4 Z" fill="#c0e4fa"/>
<path d="M59.2 9.5 H64.6 L59.4 13.9 Z" fill="#27a2d2"/>
<path d="M59.2 9.5 L59.4 13.9 L58.6 13.5 Z" fill="#8ad4f5"/>
<path d="M58.6 4.3 H62.5 M55 6.6 H62.5 M55 8.5 H59" stroke="#93cdee" stroke-width="0.9"/>
<path d="M55 2.3 H62.5" stroke="#a9d8f2" stroke-width="0.7"/>
</svg></div><div class="td" style="left:258.4px;top:432.23px"><span class="sx" style="transform:scaleX(0.92)">CRM - Usługa Doradcza</span></div><div class="td" style="left:634px;top:432.23px"><span class="sx" style="transform:scaleX(0.92)">2500.00</span></div><div class="td" style="left:722px;top:432.23px"><span class="sx" style="transform:scaleX(0.92)">Podstawowy</span></div><div class="td" style="left:808.5px;top:432.23px"><span class="sx" style="transform:scaleX(0.92)">Analiza Wymagań</span></div><div class="td" style="left:896.3px;top:432.23px"><span class="sx" style="transform:scaleX(0.92)">W realizacji</span></div><div class="cb" style="left:166px;top:462.80px"></div><div class="a" style="left:181px;top:460.30px"><svg width="66" height="15" viewBox="0 0 66 15" style="display:block;overflow:visible">
<defs><linearGradient id="tg" x1="0" y1="0" x2="0" y2="1"><stop offset="0" stop-color="#c9cdce"/><stop offset="0.55" stop-color="#c2c6c7"/><stop offset="1" stop-color="#8a8e8f"/></linearGradient></defs>
<circle cx="9.6" cy="5.3" r="4.5" fill="none" stroke="#858585" stroke-width="1.5"/>
<path d="M5.2 9.6 L1.6 13.2" stroke="#5e5e5e" stroke-width="1.9" stroke-linecap="round"/>
<path d="M17.8 13.6 L18.6 10.2 L27.4 2.2 L30.4 5 L21.4 13 Z" fill="#f5bb3e"/>
<path d="M19.4 10.5 L27.8 2.9" stroke="#fbe3a0" stroke-width="0.9"/>
<path d="M27.2 2.2 L28.4 1 C29.1 0.3 30.2 0.3 30.9 1 L31.4 1.5 C32.1 2.2 32.1 3.2 31.4 3.9 L30.3 5 Z" fill="#a8503a"/>
<path d="M17.4 14 H26.5" stroke="#aaa" stroke-width="0.7" opacity="0.7"/>
<path d="M17.7 13.8 L18.3 12.2 L19.3 13.2 Z" fill="#666"/>
<path d="M34.8 2.2 C35 1.2 36 0.9 41.7 0.9 C47.4 0.9 48.4 1.2 48.6 2.2 L48 3.4 H35.4 Z" fill="#d6dadb"/>
<path d="M36 3.2 H47.4 L46.4 13.8 H37 Z" fill="url(#tg)"/>
<path d="M36.1 3.2 H41.6 V5.8 H36.3 Z" fill="#a9ccb2"/>
<path d="M41.6 3.2 H47.3 L47.1 5.8 H41.6 Z" fill="#d8cd8c"/>
<path d="M39.2 6.2 V13.5 M41.7 6.2 V13.5 M44.2 6.2 V13.5" stroke="#b3b7b8" stroke-width="0.6"/>
<path d="M52.4 0.2 H64.9 V10 L61.2 14.1 H52.4 Z" fill="#c0e4fa"/>
<path d="M59.2 9.5 H64.6 L59.4 13.9 Z" fill="#27a2d2"/>
<path d="M59.2 9.5 L59.4 13.9 L58.6 13.5 Z" fill="#8ad4f5"/>
<path d="M58.6 4.3 H62.5 M55 6.6 H62.5 M55 8.5 H59" stroke="#93cdee" stroke-width="0.9"/>
<path d="M55 2.3 H62.5" stroke="#a9d8f2" stroke-width="0.7"/>
</svg></div><div class="td" style="left:258.4px;top:462.67px"><span class="sx" style="transform:scaleX(0.92)">Firma ABC sp. z o.o.</span></div><div class="td" style="left:634px;top:462.67px"><span class="sx" style="transform:scaleX(0.92)">0.00</span></div><div class="td" style="left:722px;top:462.67px"><span class="sx" style="transform:scaleX(0.92)">Podstawowy</span></div><div class="td" style="left:808.5px;top:462.67px"><span class="sx" style="transform:scaleX(0.92)">Zbieranie Danych</span></div><div class="td" style="left:896.3px;top:462.67px"><span class="sx" style="transform:scaleX(0.92)">Wygrana</span></div><div class="cb" style="left:166px;top:493.25px"></div><div class="a" style="left:181px;top:490.75px"><svg width="66" height="15" viewBox="0 0 66 15" style="display:block;overflow:visible">
<defs><linearGradient id="tg" x1="0" y1="0" x2="0" y2="1"><stop offset="0" stop-color="#c9cdce"/><stop offset="0.55" stop-color="#c2c6c7"/><stop offset="1" stop-color="#8a8e8f"/></linearGradient></defs>
<circle cx="9.6" cy="5.3" r="4.5" fill="none" stroke="#858585" stroke-width="1.5"/>
<path d="M5.2 9.6 L1.6 13.2" stroke="#5e5e5e" stroke-width="1.9" stroke-linecap="round"/>
<path d="M17.8 13.6 L18.6 10.2 L27.4 2.2 L30.4 5 L21.4 13 Z" fill="#f5bb3e"/>
<path d="M19.4 10.5 L27.8 2.9" stroke="#fbe3a0" stroke-width="0.9"/>
<path d="M27.2 2.2 L28.4 1 C29.1 0.3 30.2 0.3 30.9 1 L31.4 1.5 C32.1 2.2 32.1 3.2 31.4 3.9 L30.3 5 Z" fill="#a8503a"/>
<path d="M17.4 14 H26.5" stroke="#aaa" stroke-width="0.7" opacity="0.7"/>
<path d="M17.7 13.8 L18.3 12.2 L19.3 13.2 Z" fill="#666"/>
<path d="M34.8 2.2 C35 1.2 36 0.9 41.7 0.9 C47.4 0.9 48.4 1.2 48.6 2.2 L48 3.4 H35.4 Z" fill="#d6dadb"/>
<path d="M36 3.2 H47.4 L46.4 13.8 H37 Z" fill="url(#tg)"/>
<path d="M36.1 3.2 H41.6 V5.8 H36.3 Z" fill="#a9ccb2"/>
<path d="M41.6 3.2 H47.3 L47.1 5.8 H41.6 Z" fill="#d8cd8c"/>
<path d="M39.2 6.2 V13.5 M41.7 6.2 V13.5 M44.2 6.2 V13.5" stroke="#b3b7b8" stroke-width="0.6"/>
<path d="M52.4 0.2 H64.9 V10 L61.2 14.1 H52.4 Z" fill="#c0e4fa"/>
<path d="M59.2 9.5 H64.6 L59.4 13.9 Z" fill="#27a2d2"/>
<path d="M59.2 9.5 L59.4 13.9 L58.6 13.5 Z" fill="#8ad4f5"/>
<path d="M58.6 4.3 H62.5 M55 6.6 H62.5 M55 8.5 H59" stroke="#93cdee" stroke-width="0.9"/>
<path d="M55 2.3 H62.5" stroke="#a9d8f2" stroke-width="0.7"/>
</svg></div><div class="td" style="left:258.4px;top:493.12px"><span class="sx" style="transform:scaleX(0.92)">Szansa 2</span></div><div class="td" style="left:634px;top:493.12px"><span class="sx" style="transform:scaleX(0.92)">345.00</span></div><div class="td" style="left:722px;top:493.12px"><span class="sx" style="transform:scaleX(0.92)">Podstawowy</span></div><div class="td" style="left:808.5px;top:493.12px"><span class="sx" style="transform:scaleX(0.92)">Analiza Wymagań</span></div><div class="td" style="left:896.3px;top:493.12px"><span class="sx" style="transform:scaleX(0.92)">Wygrana</span></div><div class="cb" style="left:166px;top:523.70px"></div><div class="a" style="left:181px;top:521.20px"><svg width="66" height="15" viewBox="0 0 66 15" style="display:block;overflow:visible">
<defs><linearGradient id="tg" x1="0" y1="0" x2="0" y2="1"><stop offset="0" stop-color="#c9cdce"/><stop offset="0.55" stop-color="#c2c6c7"/><stop offset="1" stop-color="#8a8e8f"/></linearGradient></defs>
<circle cx="9.6" cy="5.3" r="4.5" fill="none" stroke="#858585" stroke-width="1.5"/>
<path d="M5.2 9.6 L1.6 13.2" stroke="#5e5e5e" stroke-width="1.9" stroke-linecap="round"/>
<path d="M17.8 13.6 L18.6 10.2 L27.4 2.2 L30.4 5 L21.4 13 Z" fill="#f5bb3e"/>
<path d="M19.4 10.5 L27.8 2.9" stroke="#fbe3a0" stroke-width="0.9"/>
<path d="M27.2 2.2 L28.4 1 C29.1 0.3 30.2 0.3 30.9 1 L31.4 1.5 C32.1 2.2 32.1 3.2 31.4 3.9 L30.3 5 Z" fill="#a8503a"/>
<path d="M17.4 14 H26.5" stroke="#aaa" stroke-width="0.7" opacity="0.7"/>
<path d="M17.7 13.8 L18.3 12.2 L19.3 13.2 Z" fill="#666"/>
<path d="M34.8 2.2 C35 1.2 36 0.9 41.7 0.9 C47.4 0.9 48.4 1.2 48.6 2.2 L48 3.4 H35.4 Z" fill="#d6dadb"/>
<path d="M36 3.2 H47.4 L46.4 13.8 H37 Z" fill="url(#tg)"/>
<path d="M36.1 3.2 H41.6 V5.8 H36.3 Z" fill="#a9ccb2"/>
<path d="M41.6 3.2 H47.3 L47.1 5.8 H41.6 Z" fill="#d8cd8c"/>
<path d="M39.2 6.2 V13.5 M41.7 6.2 V13.5 M44.2 6.2 V13.5" stroke="#b3b7b8" stroke-width="0.6"/>
<path d="M52.4 0.2 H64.9 V10 L61.2 14.1 H52.4 Z" fill="#c0e4fa"/>
<path d="M59.2 9.5 H64.6 L59.4 13.9 Z" fill="#27a2d2"/>
<path d="M59.2 9.5 L59.4 13.9 L58.6 13.5 Z" fill="#8ad4f5"/>
<path d="M58.6 4.3 H62.5 M55 6.6 H62.5 M55 8.5 H59" stroke="#93cdee" stroke-width="0.9"/>
<path d="M55 2.3 H62.5" stroke="#a9d8f2" stroke-width="0.7"/>
</svg></div><div class="td" style="left:258.4px;top:523.58px"><span class="sx" style="transform:scaleX(0.92)">Firma ABC - Szkolenie XYZ</span></div><div class="td" style="left:423px;top:523.58px"><span class="sx" style="transform:scaleX(0.92)">Firma ABC</span></div><div class="td" style="left:634px;top:523.58px"><span class="sx" style="transform:scaleX(0.92)">1500.00</span></div><div class="td" style="left:722px;top:523.58px"><span class="sx" style="transform:scaleX(0.92)">Podstawowy</span></div><div class="td" style="left:808.5px;top:523.58px"><span class="sx" style="transform:scaleX(0.92)">Analiza Wymagań</span></div><div class="td" style="left:896.3px;top:523.58px"><span class="sx" style="transform:scaleX(0.92)">Wygrana</span></div></body></html>
